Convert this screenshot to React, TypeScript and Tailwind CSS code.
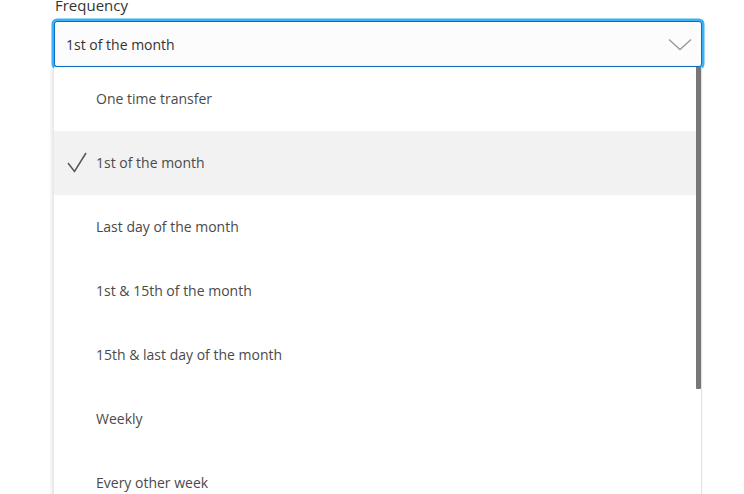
import { useState } from "react";

const OPTIONS = [
  "One time transfer",
  "1st of the month",
  "Last day of the month",
  "1st & 15th of the month",
  "15th & last day of the month",
  "Weekly",
  "Every other week",
  "Every four weeks",
];

export default function App() {
  const [selected, setSelected] = useState(1);

  return (
    <div className="min-h-screen overflow-hidden bg-white font-['Open_Sans',sans-serif]">
      <div className="w-[648px] ml-[54px]">
        {/* Label sits partly above the top edge in the screenshot */}
        <label className="-mt-[5px] block pl-px text-[15px] leading-5 text-[#333]">Frequency</label>

        {/* Focused select box */}
        <button
          type="button"
          className="mt-[6px] flex h-[46px] w-full items-center justify-between rounded-[3px] border border-[#0a6fc2] bg-[#fcfcfc] pl-[11px] pr-[10px] pt-px shadow-[0_0_0_2.5px_#3bb0f7] outline-none"
        >
          <span className="text-[14px] text-[#333]">{OPTIONS[selected]}</span>
          <svg width="24" height="13" viewBox="0 0 24 13" fill="none" className="mr-[-1px]">
            <path d="M1 1.5 L12 11.5 L23 1.5" stroke="#9a9a9a" strokeWidth="1.4" />
          </svg>
        </button>

        {/* Open list */}
        <div className="relative h-[440px] overflow-hidden border-r border-[#e2e2e2] bg-white shadow-[-2px_0_4px_rgba(0,0,0,0.12)]">
          <ul>
            {OPTIONS.map((opt, i) => (
              <li
                key={opt}
                onClick={() => setSelected(i)}
                className={
                  "relative flex h-16 cursor-pointer items-center pb-px pl-[42px] text-[14px] text-[#4a4a4a] " +
                  (i === selected ? "bg-[#f2f2f2]" : "")
                }
              >
                {i === selected && (
                  <svg width="20" height="21" viewBox="0 0 20 21" fill="none" className="absolute left-[13px] top-[21px]">
                    <path d="M1 11 L7.5 19.5 L19 1" stroke="#555" strokeWidth="1.5" />
                  </svg>
                )}
                {opt}
              </li>
            ))}
          </ul>
          {/* Scrollbar thumb */}
          <div className="absolute right-0 top-0 h-[322px] w-[5px] rounded-b-[1px] bg-[#777]" />
        </div>
      </div>
    </div>
  );
}
